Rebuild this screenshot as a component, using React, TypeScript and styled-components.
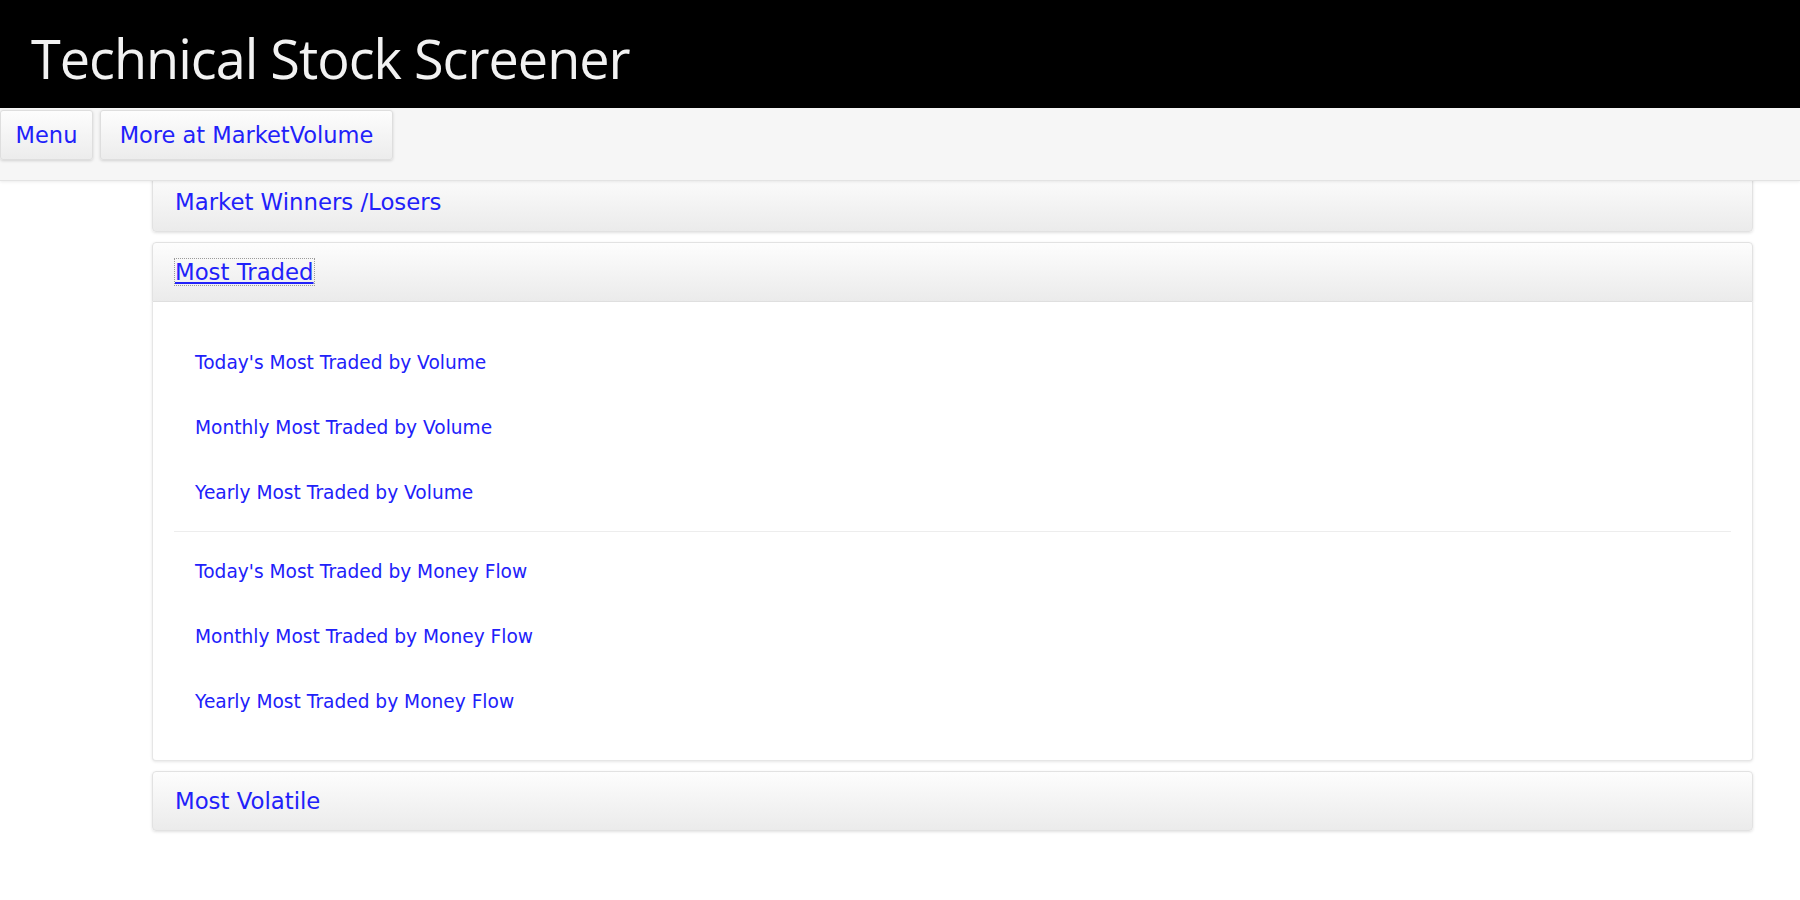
import React from 'react';
import styled, { createGlobalStyle } from 'styled-components';

const GlobalStyle = createGlobalStyle`
  body {
    margin: 0;
    background: #ffffff;
    font-family: "DejaVu Sans", Verdana, sans-serif;
  }
`;

const LINK_BLUE = '#2121fa';

// Top black title bar
const Header = styled.header`
  height: 108px;
  background: #000;
  display: flex;
  align-items: center;
  padding-left: 31px;
  box-sizing: border-box;
`;

const Title = styled.h1`
  margin: 8px 0 0 0;
  font-family: "Open Sans", "Noto Sans", sans-serif;
  font-weight: 400;
  font-size: 54px;
  letter-spacing: -1px;
  color: #f2f2f2;
`;

// Button strip under the title
const Toolbar = styled.nav`
  position: relative;
  z-index: 2;
  height: 73px;
  box-sizing: border-box;
  background: #f6f6f6;
  border-bottom: 1px solid #e3e3e3;
  box-shadow: 0 1px 3px rgba(0, 0, 0, 0.08);
  display: flex;
  align-items: flex-start;
  gap: 7px;
  padding-top: 2px;
`;

const ToolButton = styled.a<{ width: number }>`
  width: ${props => props.width}px;
  height: 50px;
  box-sizing: border-box;
  display: flex;
  align-items: center;
  justify-content: center;
  background: linear-gradient(#fdfdfd, #ececec);
  border: 1px solid #dedede;
  border-radius: 3px;
  box-shadow: 0 1px 3px rgba(0, 0, 0, 0.15);
  color: ${LINK_BLUE};
  font-size: 22.5px;
  text-decoration: none;
  cursor: pointer;
`;

const Main = styled.main`
  margin: -9px 47px 0 152px;
`;

const Panel = styled.section`
  margin-bottom: 10px;
`;

const PanelHeader = styled.div<{ open?: boolean }>`
  height: 60px;
  box-sizing: border-box;
  display: flex;
  align-items: center;
  padding: 0 22px;
  background: linear-gradient(#fdfdfd, #ebebeb);
  border: 1px solid #e2e2e2;
  border-radius: ${props => (props.open ? '4px 4px 0 0' : '4px')};
  box-shadow: 0 1px 3px rgba(0, 0, 0, 0.12);
`;

const HeaderLink = styled.a<{ focused?: boolean }>`
  color: ${LINK_BLUE};
  font-size: 22.8px;
  text-decoration: ${props => (props.focused ? 'underline' : 'none')};
  outline: ${props => (props.focused ? '1px dotted #9a9a9a' : 'none')};
  cursor: pointer;
`;

const PanelBody = styled.div`
  background: #fff;
  border: 1px solid #e6e6e6;
  border-top: none;
  border-radius: 0 0 4px 4px;
  box-shadow: 0 1px 3px rgba(0, 0, 0, 0.1);
  padding: 28px 21px 26px;
`;

const LinkList = styled.ul`
  list-style: none;
  margin: 0;
  padding: 0;
`;

const LinkItem = styled.li`
  height: 65px;
  display: flex;
  align-items: center;
  padding-left: 21px;
`;

const SubLink = styled.a`
  color: ${LINK_BLUE};
  font-size: 18.6px;
  text-decoration: none;
  cursor: pointer;
`;

const Divider = styled.hr`
  margin: 6px 0 7px;
  border: none;
  border-top: 1px solid #ededed;
`;

const volumeLinks = [
  "Today's Most Traded by Volume",
  'Monthly Most Traded by Volume',
  'Yearly Most Traded by Volume',
];

const flowLinks = [
  "Today's Most Traded by Money Flow",
  'Monthly Most Traded by Money Flow',
  'Yearly Most Traded by Money Flow',
];

const App: React.FC = () => {
  return (
    <>
      <GlobalStyle />
      <Header>
        <Title>Technical Stock Screener</Title>
      </Header>
      <Toolbar>
        <ToolButton width={93}>Menu</ToolButton>
        <ToolButton width={293}>More at MarketVolume</ToolButton>
      </Toolbar>
      <Main>
        <Panel>
          <PanelHeader>
            <HeaderLink>Market Winners /Losers</HeaderLink>
          </PanelHeader>
        </Panel>
        <Panel>
          <PanelHeader open>
            <HeaderLink focused>Most Traded</HeaderLink>
          </PanelHeader>
          <PanelBody>
            <LinkList>
              {volumeLinks.map(label => (
                <LinkItem key={label}>
                  <SubLink>{label}</SubLink>
                </LinkItem>
              ))}
            </LinkList>
            <Divider />
            <LinkList>
              {flowLinks.map(label => (
                <LinkItem key={label}>
                  <SubLink>{label}</SubLink>
                </LinkItem>
              ))}
            </LinkList>
          </PanelBody>
        </Panel>
        <Panel>
          <PanelHeader>
            <HeaderLink>Most Volatile</HeaderLink>
          </PanelHeader>
        </Panel>
      </Main>
    </>
  );
};

export default App;
